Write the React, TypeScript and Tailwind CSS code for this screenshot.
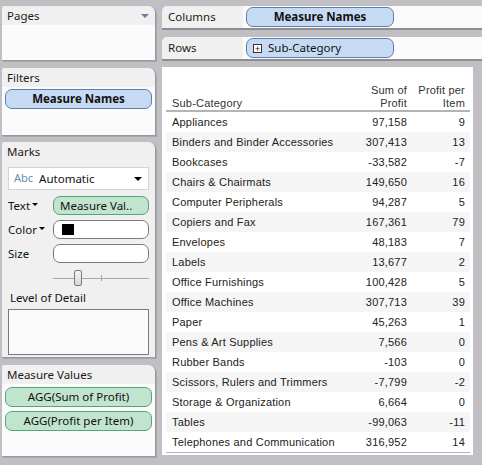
import React from "react";

const rows: [string, string, string][] = [
  ["Appliances", "97,158", "9"],
  ["Binders and Binder Accessories", "307,413", "13"],
  ["Bookcases", "-33,582", "-7"],
  ["Chairs & Chairmats", "149,650", "16"],
  ["Computer Peripherals", "94,287", "5"],
  ["Copiers and Fax", "167,361", "79"],
  ["Envelopes", "48,183", "7"],
  ["Labels", "13,677", "2"],
  ["Office Furnishings", "100,428", "5"],
  ["Office Machines", "307,713", "39"],
  ["Paper", "45,263", "1"],
  ["Pens & Art Supplies", "7,566", "0"],
  ["Rubber Bands", "-103", "0"],
  ["Scissors, Rulers and Trimmers", "-7,799", "-2"],
  ["Storage & Organization", "6,664", "0"],
  ["Tables", "-99,063", "-11"],
  ["Telephones and Communication", "316,952", "14"],
];

const ui = { fontFamily: '"Noto Sans", "Open Sans", sans-serif' };
const tbl = { fontFamily: '"Liberation Sans", Arial, sans-serif' };

function Caret() {
  return <span className="inline-block w-0 h-0 border-l-[3px] border-r-[3px] border-t-[3px] border-l-transparent border-r-transparent border-t-black ml-[2px] mb-[2px]" />;
}

function Card({ title, className, bodyClass, children }: { title: string; className: string; bodyClass?: string; children?: React.ReactNode }) {
  return (
    <div className={`flex flex-col rounded-tr-[7px] rounded-tl-[2px] border-r border-b border-[#9a9a9e] shadow-[1px_1px_0_#a8a8ac] overflow-hidden ${className}`}>
      <div className="h-[19px] shrink-0 bg-[#f0f0f0] px-[5px] flex items-center text-[11.5px] text-[#1a1a1a] leading-none">{title}</div>
      <div className={`flex-1 ${bodyClass ?? "bg-[#fbfbfb]"}`}>{children}</div>
    </div>
  );
}

function BluePill({ children, bold }: { children: React.ReactNode; bold?: boolean }) {
  return (
    <div className={`h-[20px] rounded-[7px] border border-[#5d7fa6] bg-[#c7daf3] flex items-center text-[11.5px] text-[#111] ${bold ? "font-bold justify-center" : ""}`}>
      {children}
    </div>
  );
}

function GreenPill({ children }: { children: React.ReactNode }) {
  return (
    <div className="h-[20px] rounded-[7px] border border-[#55a577] bg-[#c1e4cf] flex items-center justify-center text-[11.5px] text-[#111]">
      {children}
    </div>
  );
}

function Shelf({ label, children }: { label: string; children: React.ReactNode }) {
  return (
    <div className="flex h-[24px] rounded-tl-[5px] border-b-2 border-[#8e8e92] overflow-hidden">
      <div className="w-[81px] bg-[#f0f0f0] flex items-center pl-[6px] text-[11.5px] text-[#1a1a1a]">{label}</div>
      <div className="flex-1 bg-[#fbfbfb] flex items-center pl-[3px]">
        <div className="w-[148px]">{children}</div>
      </div>
    </div>
  );
}

export default function App() {
  return (
    <div className="relative w-[482px] h-[465px] bg-[#c0c0c4] flex overflow-hidden" style={ui}>
      {/* left column */}
      <div className="w-[154px] ml-[2px] pt-[6px] flex flex-col">
        <Card title="Pages" className="h-[55px]">
          <div />
        </Card>
        <div className="absolute left-[141px] top-[14px] w-0 h-0 border-l-[4px] border-r-[4px] border-t-[4px] border-l-transparent border-r-transparent border-t-[#5f80a8]" />
        <Card title="Filters" className="h-[68px] mt-[7px]">
          <div className="px-[3px] pt-[2px]">
            <BluePill bold>Measure Names</BluePill>
          </div>
        </Card>
        <Card title="Marks" className="h-[216px] mt-[6px]" bodyClass="bg-[#f0f0f0]">
          <div className="px-[6px] pt-[6px] flex flex-col">
            <div className="h-[23px] bg-white border border-[#d4d4d4] flex items-center pl-[5px] pr-[6px] text-[11.5px]">
              <span className="text-[#6b8bb2] text-[11px] mr-[6px]">Abc</span>
              <span className="text-[#111] flex-1">Automatic</span>
              <span className="w-0 h-0 border-l-[4px] border-r-[4px] border-t-[4px] border-l-transparent border-r-transparent border-t-black" />
            </div>
            <div className="flex items-center mt-[6px] h-[19px] text-[11.5px] text-[#111]">
              <div className="w-[45px] flex items-center">Text<Caret /></div>
              <div className="flex-1 h-[19px] rounded-[7px] border border-[#55a577] bg-[#c1e4cf] flex items-center pl-[6px]">Measure Val..</div>
            </div>
            <div className="flex items-center mt-[5px] h-[19px] text-[11.5px] text-[#111]">
              <div className="w-[45px] flex items-center">Color<Caret /></div>
              <div className="flex-1 h-[19px] rounded-[7px] border border-[#7a7a7a] bg-white flex items-center pl-[8px]">
                <div className="w-[12px] h-[11px] bg-black" />
              </div>
            </div>
            <div className="flex items-center mt-[5px] h-[19px] text-[11.5px] text-[#111]">
              <div className="w-[45px]">Size</div>
              <div className="flex-1 h-[19px] rounded-[7px] border border-[#7a7a7a] bg-white" />
            </div>
            <div className="relative ml-[45px] h-[22px] mt-[2px]">
              <div className="absolute left-0 right-0 top-[13px] h-px bg-[#a8a8a8]" />
              <div className="absolute left-[48px] top-[10px] w-px h-[6px] bg-[#a8a8a8]" />
              <div className="absolute left-[21px] top-[5px] w-[8px] h-[16px] rounded-[2px] border border-[#7a7a7a] bg-gradient-to-b from-[#f4f4f4] to-[#d8d8d8]" />
            </div>
            <div className="text-[11.5px] text-[#111] mt-[4px] leading-[14px] pl-[2px]">Level of Detail</div>
            <div className="h-[46px] mt-[4px] bg-[#fbfbfb] border border-[#7a7a7a]" />
          </div>
        </Card>
        <Card title="Measure Values" className="h-[92px] mt-[7px]">
          <div className="px-[3px] pt-[3px] flex flex-col gap-[4px]">
            <GreenPill>AGG(Sum of Profit)</GreenPill>
            <GreenPill>AGG(Profit per Item)</GreenPill>
          </div>
        </Card>
      </div>

      {/* right column */}
      <div className="flex-1 ml-[6px] pt-[6px] flex flex-col">
        <Shelf label="Columns">
          <BluePill bold>Measure Names</BluePill>
        </Shelf>
        <div className="mt-[7px]">
          <Shelf label="Rows">
            <BluePill>
              <span className="ml-[6px] mr-[6px] w-[9px] h-[9px] border border-[#333] bg-white flex items-center justify-center text-[9px] leading-none">+</span>
              Sub-Category
            </BluePill>
          </Shelf>
        </div>
        <div className="w-[311px] h-[388px] mt-[6px] bg-white pl-[4px] pt-[15px]" style={tbl}>
          <div className="w-[304px] text-[11px] tracking-[0.2px] text-[#222]">
            <div className="flex items-end h-[30px] pb-0 border-b-2 border-[#b4b4b4] text-[#333] leading-[13px]">
              <div className="w-[179px] pl-[6px]">Sub-Category</div>
              <div className="w-[66px] text-right pr-[4px]">Sum of<br />Profit</div>
              <div className="w-[59px] text-right pr-[5px]">Profit per<br />Item</div>
            </div>
            {rows.map(([n, a, b], i) => (
              <div key={n} className={`flex items-center h-[20px] ${i % 2 === 1 ? "bg-[#f5f5f5]" : "bg-white"}`}>
                <div className="w-[179px] pl-[6px] whitespace-nowrap">{n}</div>
                <div className="w-[66px] text-right pr-[4px]">{a}</div>
                <div className="w-[59px] text-right pr-[5px]">{b}</div>
              </div>
            ))}
            <div className="h-px bg-[#b4b4b4]" />
          </div>
        </div>
      </div>
    </div>
  );
}
